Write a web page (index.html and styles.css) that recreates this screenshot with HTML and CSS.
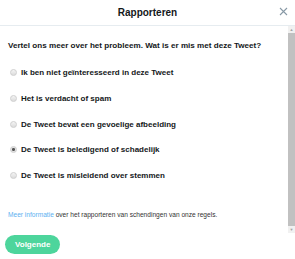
FILE: index.html
```
<!DOCTYPE html>
<html lang="nl">
<head>
  <meta charset="UTF-8" />
  <title>Rapporteren</title>
  <link rel="stylesheet" href="styles.css">
</head>
<body>
  <div class="header">
    <h1>Rapporteren</h1>
    <span class="close">
      <svg width="9" height="9" viewBox="0 0 9 9"><path d="M1 1L8 8M8 1L1 8" stroke="#8899a6" stroke-width="1.1" fill="none"/></svg>
    </span>
  </div>

  <div class="body">
    <div class="content">
      <p class="question">Vertel ons meer over het probleem. Wat is er mis met deze Tweet?</p>

      <label class="option"><input type="radio" name="reason"> Ik ben niet geïnteresseerd in deze Tweet</label>
      <label class="option"><input type="radio" name="reason"> Het is verdacht of spam</label>
      <label class="option"><input type="radio" name="reason"> De Tweet bevat een gevoelige afbeelding</label>
      <label class="option"><input type="radio" name="reason" checked> De Tweet is beledigend of schadelijk</label>
      <label class="option"><input type="radio" name="reason"> De Tweet is misleidend over stemmen</label>

      <p class="info"><a href="#">Meer informatie</a> over het rapporteren van schendingen van onze regels.</p>
    </div>
    <div class="scrollbar">
      <span class="arrow">&#9650;</span>
      <span class="thumb"></span>
      <span class="arrow">&#9660;</span>
    </div>
  </div>

  <div class="footer">
    <button>Volgende</button>
  </div>
</body>
</html>
```

FILE: styles.css
```
body {
  margin: 0;
  font-family: "Liberation Sans", Arial, sans-serif;
  color: #14171a;
  background: #fff;
}
.header {
  height: 25px;
  border-bottom: 1px solid #e6ecf0;
  display: flex;
  align-items: center;
  justify-content: center;
  position: relative;
}
h1 {
  margin: 0;
  font-size: 10px;
  font-weight: bold;
}
.close {
  position: absolute;
  right: 7px;
  top: 7px;
  display: flex;
}
.body {
  display: flex;
  height: 207px;
}
.content {
  flex: 1;
  padding: 15px 8px 0 8px;
}
.question {
  margin: 0 0 10px 0;
  font-size: 8.1px;
  font-weight: bold;
}
.option {
  display: flex;
  align-items: center;
  height: 25.7px;
  font-size: 8px;
  font-weight: bold;
}
.option input {
  appearance: none;
  -webkit-appearance: none;
  margin: 0 4px 0 2px;
  width: 7px;
  height: 7px;
  border-radius: 50%;
  border: 1px solid #cfcfcf;
  background: linear-gradient(#f4f4f4, #dcdcdc);
  box-sizing: border-box;
}
.option input:checked {
  background: radial-gradient(circle, #555 0, #555 1.2px, #e2e2e2 1.8px);
}
.info {
  margin: 23px 0 0 0;
  font-size: 6.6px;
  color: #333;
}
.info a {
  color: #5cb0f0;
  text-decoration: none;
}
.scrollbar {
  width: 7px;
  background: #f1f1f1;
  display: flex;
  flex-direction: column;
}
.arrow {
  height: 7px;
  font-size: 4px;
  color: #a3a3a3;
  text-align: center;
  line-height: 7px;
}
.thumb {
  flex: 1;
  background: #c1c1c1;
}
.footer {
  display: flex;
  padding: 2px 5px;
}
button {
  background: #4dd59c;
  color: #fff;
  border: none;
  border-radius: 10px;
  height: 19px;
  padding: 0 10px;
  font-family: "Liberation Sans", Arial, sans-serif;
  font-size: 8px;
  font-weight: bold;
}
```
